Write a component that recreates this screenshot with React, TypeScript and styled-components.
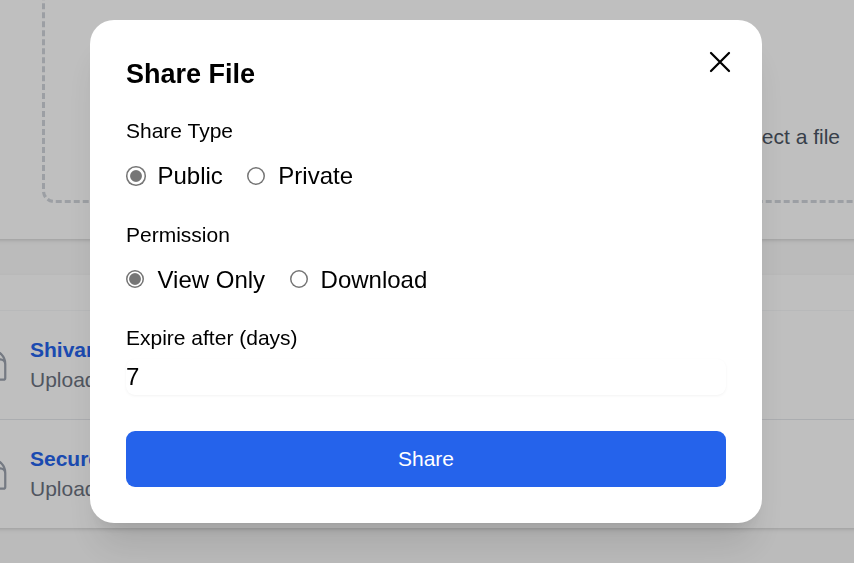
import React, { useState } from "react";
import styled, { createGlobalStyle } from "styled-components";

const GlobalStyle = createGlobalStyle`
  *, *::before, *::after { box-sizing: border-box; }
  body {
    margin: 0;
    overflow: hidden;
    background: #fafafa;
    color: #000;
    font-family: "Liberation Sans", Arial, sans-serif;
  }
`;

const Page = styled.main`
  display: flex;
  flex-direction: column;
  gap: 36px;
  height: 563px;
  overflow: hidden;
`;

const cardShadow = "0 1.5px 4.5px rgba(0,0,0,.1), 0 1.5px 3px -1.5px rgba(0,0,0,.1)";

const UploadCard = styled.section`
  display: flex;
  flex: none;
  height: 239px;
  margin: 0 -36px;
  padding: 0 0 36px 78px;
  background: #fff;
  box-shadow: ${cardShadow};
`;

const DropZone = styled.div`
  display: flex;
  flex: none;
  align-items: flex-end;
  align-self: flex-end;
  justify-content: flex-end;
  width: 1002px;
  height: 369px;
  padding: 0 201px 48px 0;
  border: 3px dashed #d1d5db;
  border-radius: 12px;
`;

const DropHint = styled.p`
  margin: 0;
  color: #4b5563;
  font-size: 21px;
  line-height: 30px;
  white-space: nowrap;
`;

const FilesCard = styled.section`
  flex: none;
  height: 253px;
  margin: 0 -36px;
  padding-top: 35px;
  background: #fff;
  box-shadow: ${cardShadow};
`;

const FileRow = styled.article<{ $line: string }>`
  display: flex;
  align-items: center;
  gap: 18px;
  height: 109px;
  padding-left: 12px;
  border-top: 1px solid ${(p) => p.$line};
`;

const FileIcon = styled.svg`
  flex: none;
  width: 36px;
  height: 36px;
  color: #9ca3af;
`;

const FileName = styled.div`
  color: #2563eb;
  font-size: 21px;
  font-weight: 700;
  line-height: 30px;
`;

const FileMeta = styled.div`
  color: #6b7280;
  font-size: 21px;
  line-height: 30px;
`;

const Overlay = styled.div`
  position: fixed;
  inset: 0;
  display: flex;
  align-items: flex-start;
  padding: 20px 0 0 90px;
  background: rgba(0, 0, 0, 0.25);
`;

const Dialog = styled.div`
  position: relative;
  display: flex;
  flex-direction: column;
  width: 672px;
  height: 503px;
  padding: 36px;
  border-radius: 24px;
  background: #fff;
  box-shadow: 0 30px 37.5px -7.5px rgba(0, 0, 0, 0.1), 0 12px 15px -9px rgba(0, 0, 0, 0.1);
`;

const CloseButton = styled.button`
  position: absolute;
  top: 24px;
  right: 24px;
  display: flex;
  padding: 0;
  border: 0;
  background: none;
  color: #000;
`;

const Title = styled.h2`
  margin: 0 0 24px;
  font-size: 27px;
  font-weight: 700;
  line-height: 36px;
`;

const Field = styled.div<{ $space: number }>`
  margin-bottom: ${(p) => p.$space}px;
`;

const FieldLabel = styled.div`
  font-size: 21px;
  line-height: 30px;
`;

const Options = styled.div`
  display: flex;
  gap: 24px;
  margin-top: 12px;
`;

const Option = styled.label`
  display: flex;
  align-items: center;
  gap: 12px;
  font-size: 24px;
  line-height: 36px;
`;

const Radio = styled.input<{ $size: number; $lift: number }>`
  appearance: none;
  flex: none;
  width: ${(p) => p.$size}px;
  height: ${(p) => p.$size}px;
  margin: 0 ${(p) => (19.5 - p.$size) * 0.7}px ${(p) => p.$lift}px ${(p) => (19.5 - p.$size) * 0.3}px;
  border-radius: 50%;
  background: #fff;
  box-shadow: inset 0 0 0 1.5px #767676;
  &:checked {
    background: radial-gradient(circle, #767676 5.4px, #fff 6.3px);
  }
`;

const DaysInput = styled.input`
  display: block;
  width: 100%;
  height: 36px;
  margin: 6px 0 0;
  padding: 0;
  border: 0;
  outline: 0;
  border-radius: 9px;
  background: #fff;
  box-shadow: 0 1px 3px rgba(0, 0, 0, 0.05);
  color: #000;
  font: 24px/36px "Liberation Sans", Arial, sans-serif;
`;

const ShareButton = styled.button`
  height: 56px;
  padding: 0;
  border: 0;
  border-radius: 9px;
  background: #2563eb;
  color: #fff;
  font: 21px/30px "Liberation Sans", Arial, sans-serif;
`;

const files = [
  { name: "Shivam", meta: "Uploaded", line: "#f6f7f8" },
  { name: "Secure", meta: "Uploaded", line: "#e5e7eb" },
];

type ChoiceProps = {
  label: string;
  name: string;
  options: { text: string; size: number }[];
  space: number;
  lift: number;
};

function Choice({ label, name, options, space, lift }: ChoiceProps) {
  const [selected, setSelected] = useState(options[0].text);
  return (
    <Field $space={space}>
      <FieldLabel>{label}</FieldLabel>
      <Options>
        {options.map(({ text, size }) => (
          <Option key={text}>
            <Radio
              $size={size}
              $lift={lift}
              type="radio"
              name={name}
              checked={selected === text}
              onChange={() => setSelected(text)}
            />
            {text}
          </Option>
        ))}
      </Options>
    </Field>
  );
}

export default function App() {
  const [days, setDays] = useState("7");
  return (
    <>
      <GlobalStyle />
      <Page>
        <UploadCard>
          <DropZone>
            <DropHint>Select a file</DropHint>
          </DropZone>
        </UploadCard>
        <FilesCard>
          {files.map((file) => (
            <FileRow key={file.name} $line={file.line}>
              <FileIcon viewBox="0 0 24 24" fill="none" stroke="currentColor" strokeWidth="1.5" strokeLinecap="round" strokeLinejoin="round">
                <path d="M19.5 14.25v-2.625a3.375 3.375 0 0 0-3.375-3.375h-1.5A1.125 1.125 0 0 1 13.5 7.125v-1.5a3.375 3.375 0 0 0-3.375-3.375H8.25m2.25 0H5.625c-.621 0-1.125.504-1.125 1.125v17.25c0 .621.504 1.125 1.125 1.125h12.75c.621 0 1.125-.504 1.125-1.125V11.25a9 9 0 0 0-9-9Z" />
              </FileIcon>
              <div>
                <FileName>{file.name}</FileName>
                <FileMeta>{file.meta}</FileMeta>
              </div>
            </FileRow>
          ))}
        </FilesCard>
      </Page>
      <Overlay>
        <Dialog role="dialog" aria-label="Share File">
          <CloseButton aria-label="Close">
            <svg width="36" height="36" viewBox="0 0 24 24" fill="none" stroke="currentColor" strokeWidth="1.5" strokeLinecap="round">
              <path d="M6 18 18 6M6 6l12 12" />
            </svg>
          </CloseButton>
          <Title>Share File</Title>
          <Choice
            label="Share Type"
            name="type"
            options={[{ text: "Public", size: 19.5 }, { text: "Private", size: 18 }]}
            space={26}
            lift={0.5}
          />
          <Choice
            label="Permission"
            name="permission"
            options={[{ text: "View Only", size: 18 }, { text: "Download", size: 18 }]}
            space={25}
            lift={2}
          />
          <Field $space={36}>
            <FieldLabel>Expire after (days)</FieldLabel>
            <DaysInput value={days} onChange={(e) => setDays(e.target.value)} />
          </Field>
          <ShareButton>Share</ShareButton>
        </Dialog>
      </Overlay>
    </>
  );
}
